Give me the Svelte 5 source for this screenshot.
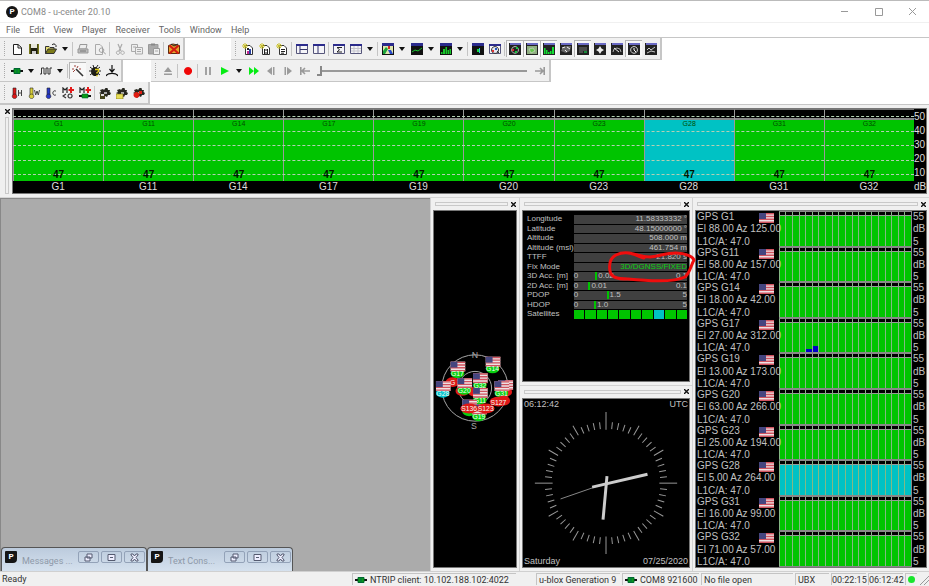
<script lang="ts">
  // [path, fill, stroke, stroke width]
  type Shape = [string, string, string?, number?];

  interface Tool {
    icon: string;
    label: string;
    down?: boolean;
    off?: boolean;
  }

  type Item = Tool | 'sep' | 'caret';

  const frame: Shape[] = [
    ['M0 0H12V12H0Z', '#111'],
    ['M0 0H12V3H0Z', '#2b2b8c'],
  ];
  const dockFrame: Shape[] = [
    ['M0 0H12V12H0Z', '#222'],
    ['M1 0H12V2H1Z', '#6a6ac4'],
  ];
  const lightFrame: Shape[] = [
    ['M.5 1.5H11.5V10.5H.5Z', '#f4f4f8', '#55557a', 1],
    ['M0 1H12V3H0Z', '#2b2b8c'],
  ];
  const sheet: Shape[] = [
    ['M3.5 2.5H8L10.5 5V11.5H3.5Z', '#fff', '#333', 1],
    ['M0 3H6M3 0V6M1 1L5 5M5 1L1 5', 'none', '#c9c02c', 1],
  ];
  const thermo = (color: string): Shape[] => [
    ['M2 1H5V8H2Z', color, '#222', 0.6],
    ['M3.5 7A2.3 2.3 0 1 0 3.6 7Z', color, '#222', 0.6],
  ];
  const gear: Shape[] = [
    ['M4 2L5 3L6.5 1H8.5L9 3L11 3L10.5 5L12 6L11 8L9 8L8 10L6 9L4 11L3 9L1 9L2 7L0 6L2 5L1 3Z', '#26261f'],
    ['M5 5H8V7H5Z', '#aaa'],
  ];
  const plug: Shape[] = [
    ['M0 6H12', 'none', '#111', 2],
    ['M3 3.5H9V8.5H3Z', '#0a9a18', '#063', 1],
    ['M6 4V8', 'none', '#065', 1],
  ];

  const icons: Record<string, Shape[]> = {
    new: [['M2.5 1.5H7L10.5 4.5V11.5H2.5Z', '#fff', '#222', 1], ['M7 1.5V5H10', 'none', '#222', 1]],
    save: [['M1 1H11V11H1Z', '#1c1c10'], ['M3 1H9V5H3Z', '#e6e6dc'], ['M1 1H2.5V11H1ZM9.5 1H11V11H9.5Z', '#77771c'], ['M4 8H8V11H4Z', '#ccc']],
    open: [['M.5 10.5V3.5H4L5 4.5H9V6', '#e5dd72', '#333', 1], ['M.5 10.5L3 6H11.5L9 10.5Z', '#7c7a18', '#333', 1], ['M7 2C8 .5 10 .5 11 2.5V4', 'none', '#222', 1]],
    print: [['M3 1.5H10L9 6H2Z', '#eee', '#999', 1], ['M1 6H11V10H1Z', '#bbb', '#999', 1], ['M3 8H9', 'none', '#777', 1]],
    preview: [['M1.5 1.5H6L8.5 4V11.5H1.5Z', '#f0f0f0', '#aaa', 1], ['M7.5 5A2.2 2.2 0 1 0 7.6 5ZM9 8.5L12 11.5', 'none', '#999', 1]],
    cut: [['M4 1L7 8M8 1L5 8', 'none', '#aaa', 1.2], ['M4 8A1.7 1.7 0 1 0 4.1 8ZM8.5 8A1.7 1.7 0 1 0 8.6 8Z', 'none', '#aaa', 1]],
    copy: [['M.5 1.5H6.5V8.5H.5Z', '#eee', '#aaa', 1], ['M4.5 4.5H11.5V11H4.5Z', '#eee', '#aaa', 1], ['M2 4H5M6 6.5H10M6 8.5H10', 'none', '#aaa', 1]],
    paste: [['M.5 1.5H10V11H.5Z', '#aaa', '#999', 1], ['M3 .5H7V2.5H3Z', '#888'], ['M5.5 5.5H11.5V11.5H5.5Z', '#eee', '#999', 1], ['M7 8H10', 'none', '#aaa', 1]],
    erase: [['M.5 2.5L5 1L11.5 2.5V10.5H.5Z', '#e5a52d', '#5b2a10', 1], ['M1.5 2.5L10.5 10.5M10.5 2.5L1.5 10.5', 'none', '#d31b10', 2.2], ['M3 1L6 3L10 1', 'none', '#222', 1]],
    sheetChart: [...sheet, ['M5 8H7V11H5Z', '#c3298f'], ['M7 6H9V11H7Z', '#2741a6'], ['M5 5H7V7H5Z', '#222']],
    sheetBinary: [...sheet, ['M5.5 6V11M8.5 6V11M7 6V8M7 9V11', 'none', '#222', 1]],
    sheetText: [...sheet, ['M5 6.5H9M5 8.5H9M5 10.2H8', 'none', '#222', 1]],
    viewTable: [...lightFrame, ['M4 3V10M4 6.5H11', 'none', '#33336a', 1]],
    viewTree: [...lightFrame, ['M5 3V10', 'none', '#33336a', 1]],
    viewSum: [...lightFrame, ['M9 4.5H4L6.5 6.7L4 9H9', 'none', '#222', 1]],
    viewGrid: [...lightFrame, ['M1 5.5H11M1 8H11M4 3V10M8 3V10', 'none', '#c4c4cc', 1]],
    map: [...frame, ['M1 3H11V11H1Z', '#dfe6ae'], ['M1 8L4 4L6 6L3 11H1Z', '#19a33a'], ['M6 7L9 7L11 11H8Z', '#2546c9'], ['M6 3H8V6H6Z', '#d22f24']],
    chartLine: [...frame, ['M1 9L4 7L7 8L11 5', 'none', '#16c42c', 1]],
    chartBars: [...frame, ['M1 9H2.5V11H1ZM3 6H5V11H3ZM5.5 4H7V11H5.5ZM7.5 7H9V11H7.5ZM9.5 6H11V11H9.5Z', '#18c92b']],
    deviation: [...frame, ['M5 6H8V9H5Z', '#10d838'], ['M7 5H8V10H7Z', '#38bfe0']],
    sky: [...lightFrame, ['M6 3.5A3.5 3.5 0 1 0 6.1 3.5Z', '#e5e5ee', '#333', 1], ['M3 7H5V9H3Z', '#d33'], ['M6 5H8V7H6Z', '#25b'], ['M8 8L10 10', 'none', '#333', 1]],
    dockSky: [...dockFrame, ['M6 3.5A3.4 3.4 0 1 0 6.1 3.5Z', 'none', '#b9b9b9', 1], ['M3 6H5V8H3Z', '#da2d2d'], ['M7 4H9V6H7ZM6 8H8V10H6Z', '#1ac33e']],
    dockMap: [...dockFrame, ['M1 3H11V11H1Z', '#8fae80'], ['M3 6L7 5L9 8L5 10Z', '#66c64c', '#ddd', 0.6]],
    dockLevel: [...dockFrame, ['M1 5H2.5V11H1ZM3 7H4.5V11H3ZM5 9H6.5V11H5ZM7 8H8.5V11H7ZM9 4H11V11H9Z', '#13df32']],
    dockWorld: [...dockFrame, ['M6 3L11 3L10 8L6 10L1 8L3 4Z', '#666'], ['M2 5L5 4M7 4L10 6M5 7L7 9', 'none', '#eee', 1]],
    dockData: [...dockFrame, ['M2 5H10M2 7H10M2 9H6', 'none', '#777', 1], ['M7 8H10V10H7Z', '#188a3a']],
    dockCompass: [...dockFrame, ['M6 3L7.5 5.5L10 7L7.5 8.5L6 11L4.5 8.5L2 7L4.5 5.5Z', '#eee']],
    dockSpeed: [...dockFrame, ['M2 9A4 4 0 0 1 10 9', 'none', '#aaa', 1], ['M3 5L8 9', 'none', '#eee', 1]],
    dockClock: [...dockFrame, ['M6 3.5A3.4 3.4 0 1 0 6.1 3.5Z', 'none', '#d5d5d5', 1], ['M6 5V7L8 9', 'none', '#fff', 1]],
    dockAlt: [...dockFrame, ['M2 7L4 5L6 7L10 4M2 10L6 8L10 9', 'none', '#ccc', 1]],
    plug,
    wave: [['M0 9H1.5V3H4V9H6V3H8V9H10V3H12', 'none', '#333', 1]],
    wand: [['M4 4L11 11', 'none', '#333', 1.6], ['M0 4H2M3 0V2M6 1L5 3M1 7L3 5M7 4H9', 'none', '#a0433c', 1]],
    bug: [['M6 2A4 4.5 0 1 0 6.1 2Z', '#1b1b12'], ['M1 2L11 10M1 10L11 2M0 6H12M4 0L5 3M9 0L7 3', 'none', '#222', 1], ['M6 4.5H9.5V6.5L8 7.5V8.5M8 10V11.5', 'none', '#e1cf1e', 1.4]],
    antenna: [['M6 0V7M3.5 4L6 7L8.5 4', 'none', '#111', 1.2], ['M0 11C2 7.5 10 7.5 12 11', 'none', '#111', 1.3]],
    eject: [['M6 2L10 7H2ZM2 8.5H10V10H2Z', '#9b9b9b']],
    record: [['M6 2A4 4 0 1 0 6.1 2Z', '#f00606']],
    pause: [['M3 2H5V10H3ZM7 2H9V10H7Z', '#a2a2a2']],
    play: [['M2 2L10 6L2 10Z', '#05ec13']],
    forward: [['M1 2L6 6L1 10ZM6 2L11 6L6 10Z', '#05ec13']],
    stepBack: [['M7 2V10L2 6ZM8 2H9.5V10H8Z', '#9b9b9b']],
    stepNext: [['M5 2V10L10 6ZM2.5 2H4V10H2.5Z', '#9b9b9b']],
    toStart: [['M1.8 2V10M3 6H11M6 3L3 6L6 9', 'none', '#999', 1.6]],
    toEnd: [['M10.2 2V10M1 6H9M6 3L9 6L6 9', 'none', '#999', 1.6]],
    hot: [...thermo('#e01818'), ['M7.5 3V9M10.5 3V9M7.5 6H10.5', 'none', '#444', 1]],
    warm: [...thermo('#d9cf3a'), ['M6.5 3L7.7 8L9 4L10.3 8L11.5 3', 'none', '#444', 1]],
    cold: [...thermo('#2638c8'), ['M11 4.3C10 3 7.8 4 7.8 6S10 9 11 7.7', 'none', '#444', 1]],
    msgPoll: [['M1 6V1L3 3L5 1V6', 'none', '#222', 1.2], ['M9 0V6M6.5 3H12', 'none', '#e31b1b', 2], ['M4 7L1 9L4 11M8 7A2 2 0 1 0 8.1 7Z', 'none', '#333', 1.2]],
    msgSend: [['M1 6V1L3 3L5 1V6', 'none', '#222', 1.2], ['M9 0V6M6.5 3H12', 'none', '#e31b1b', 2], ['M0 9H12', 'none', '#111', 2], ['M3 7H9V11H3Z', '#0a9a18', '#063', 0.6]],
    gearSave: [...gear, ['M1 7H6V12H1Z', '#44441c'], ['M2 7H5V9H2Z', '#ddd']],
    gearOpen: [...gear, ['M0 7H7V12H0Z', '#e6dc55', '#77701a', 0.6]],
    gearStop: [...gear, ['M3.5 5A3 3 0 1 0 3.6 5ZM6 4H9V7H6Z', '#e01d12']],
  };

  const t = (icon: string, label: string, extra: Partial<Tool> = {}): Tool => ({ icon, label, ...extra });

  const fileTools: Item[] = [
    t('new', 'New'), t('save', 'Save'), t('open', 'Open'), 'caret', 'sep',
    t('print', 'Print', { off: true }), t('preview', 'Print preview', { off: true }), 'sep',
    t('cut', 'Cut', { off: true }), t('copy', 'Copy', { off: true }), t('paste', 'Paste', { off: true }), 'sep',
    t('erase', 'Clear all'),
  ];
  const viewTools: Item[] = [
    t('sheetChart', 'Packet console'), t('sheetBinary', 'Binary console'), t('sheetText', 'Text console'), 'sep',
    t('viewTable', 'Messages view'), t('viewTree', 'Configuration view'), 'sep',
    t('viewSum', 'Statistic view'), t('viewGrid', 'Table view'), 'caret', 'sep',
    t('map', 'Map view'), 'caret', t('chartLine', 'Chart view'), 'caret', t('chartBars', 'Histogram view'), 'caret', 'sep',
    t('deviation', 'Deviation map'), t('sky', 'Sky view'), 'sep',
    t('dockSky', 'Satellite position', { down: true }), t('dockMap', 'Satellite level history', { down: true }),
    t('dockLevel', 'Satellite level', { down: true }), t('dockWorld', 'World position'), t('dockData', 'Data', { down: true }),
    t('dockCompass', 'Compass'), t('dockSpeed', 'Speedometer'), t('dockClock', 'Clock', { down: true }), t('dockAlt', 'Altitude meter'),
  ];
  const portTools: Item[] = [
    t('plug', 'Port'), 'caret', t('wave', 'Baudrate'), 'caret',
    'sep', t('wand', 'Autobauding', { down: true }), t('bug', 'Debug messages'), t('antenna', 'Receiver antenna'),
  ];
  const playTools: Item[] = [
    t('eject', 'Eject', { off: true }), 'sep', t('record', 'Record'), 'sep', t('pause', 'Pause', { off: true }),
    t('play', 'Play'), 'caret', t('forward', 'Fast forward'), t('stepBack', 'Step backward', { off: true }),
    t('stepNext', 'Step forward', { off: true }), t('toStart', 'Rewind to start', { off: true }),
  ];
  const actionTools: Item[] = [
    t('hot', 'Hotstart'), t('warm', 'Warmstart'), t('cold', 'Coldstart'), t('msgPoll', 'Poll message'), t('msgSend', 'Send message'), 'sep',
    t('gearSave', 'Save config'), t('gearOpen', 'Load config'), t('gearStop', 'Revert config'),
  ];

  const menus = ['File', 'Edit', 'View', 'Player', 'Receiver', 'Tools', 'Window', 'Help'];

  const satellites = [
    { id: 'G1', el: '88.00', az: '125.00' },
    { id: 'G11', el: '58.00', az: '157.00' },
    { id: 'G14', el: '18.00', az: '42.00' },
    { id: 'G17', el: '27.00', az: '312.00' },
    { id: 'G19', el: '13.00', az: '173.00' },
    { id: 'G20', el: '63.00', az: '266.00' },
    { id: 'G23', el: '25.00', az: '194.00' },
    { id: 'G28', el: '5.00', az: '264.00' },
    { id: 'G31', el: '16.00', az: '99.00' },
    { id: 'G32', el: '71.00', az: '57.00' },
  ];
  const isFloat = (id: string) => id === 'G28';

  const dips: Record<number, number> = { 4: 10, 5: 18 };

  const values = [
    ['Longitude', '11.58333332 °'],
    ['Latitude', '48.15000000 °'],
    ['Altitude', '508.000 m'],
    ['Altitude (msl)', '461.754 m'],
    ['TTFF', '21.820 s'],
    ['Fix Mode', '3D/DGNSS/FIXED'],
  ];
  const gauges = [
    { label: '3D Acc. [m]', value: '0.02', max: '0.1', pos: 19 },
    { label: '2D Acc. [m]', value: '0.01', max: '0.1', pos: 13 },
    { label: 'PDOP', value: '1.5', max: '5', pos: 29 },
    { label: 'HDOP', value: '1.0', max: '5', pos: 18 },
  ];

  // sky plot, centre 42,42
  const marks = [
    { id: 'G', x: 19, y: 36, color: '#e01818', flag: false },
    { id: '3', x: 42, y: 46, color: '#e01818', flag: false },
    { id: '', x: 73, y: 46, color: '#e01818', flag: true },
    { id: 'G17', x: 24, y: 27, color: '#08d010', flag: true },
    { id: 'G14', x: 60, y: 22, color: '#08d010', flag: true },
    { id: 'G28', x: 9, y: 47, color: '#00c4d0', flag: true },
    { id: 'G32', x: 47, y: 39, color: '#08d010', flag: true },
    { id: '', x: 29, y: 45, color: '#e01818', flag: false },
    { id: 'G20', x: 31, y: 44, color: '#08d010', flag: true },
    { id: 'G11', x: 47, y: 54, color: '#08d010', flag: true },
    { id: 'G31', x: 69, y: 47, color: '#08d010', flag: true },
    { id: '', x: 36, y: 66, color: '#08d010', flag: true },
    { id: 'G19', x: 46, y: 71, color: '#08d010', flag: true },
    { id: '', x: 71, y: 55, color: '#e01818', flag: false },
    { id: 'S127', x: 66, y: 56, color: '#e01818', flag: false },
    { id: 'S123', x: 53, y: 63, color: '#e01818', flag: false },
    { id: 'S136', x: 36, y: 63, color: '#e01818', flag: false },
  ];

  const ticks = Array.from({ length: 60 }, (_, i) => {
    if (i % 15 === 0) return { angle: i * 6, from: 54, to: 72 };
    if (i % 5 === 0) return { angle: i * 6, from: 56, to: 67 };
    return { angle: i * 6, from: 55, to: 62 };
  });

  let progress = $state(0);
</script>

{#snippet icon(name: string)}
  <svg class="icon" viewBox="0 0 12 12" aria-hidden="true">
    {#each icons[name] as [d, fill, stroke, width]}
      <path {d} {fill} stroke={stroke ?? 'none'} stroke-width={width ?? 0} />
    {/each}
  </svg>
{/snippet}

{#snippet toolbar(items: Item[])}
  <span class="grip"></span>
  {#each items as item}
    {#if item === 'sep'}
      <span class="sep"></span>
    {:else if item === 'caret'}
      <button class="caret" aria-label="More options">
        <svg width="6" height="4" viewBox="0 0 6 4"><path d="M0 0H6L3 4Z" fill="#111" /></svg>
      </button>
    {:else}
      <button class="tool" class:down={item.down} disabled={item.off} title={item.label} aria-label={item.label}>
        {@render icon(item.icon)}
      </button>
    {/if}
  {/each}
{/snippet}

{#snippet flagShapes()}
  <path d="M0 0H15V10H0Z" fill="#eee1e3" />
  <path d="M0 .7H15M0 3.5H15M0 6.3H15M0 9.2H15" stroke="#d0535f" stroke-width="1.4" />
  <path d="M0 0H7V6H0Z" fill="#45457f" />
{/snippet}

{#snippet caption()}
  <div class="caption">
    <span class="ridge"></span>
    <button class="close" aria-label="Close panel">
      <svg width="5" height="5" viewBox="0 0 5 5"><path d="M0 0L5 5M5 0L0 5" stroke="#111" stroke-width="1.4" /></svg>
    </button>
  </div>
{/snippet}

{#snippet logo()}
  <span class="logo">P</span>
{/snippet}

<div class="app">
  <header class="titlebar">
    {@render logo()}
    <h1>COM8 - u-center 20.10</h1>
    <div class="window-buttons">
      <button aria-label="Minimize"><svg width="9" height="9" viewBox="0 0 9 9"><path d="M1 4.5H8" /></svg></button>
      <button aria-label="Maximize"><svg width="9" height="9" viewBox="0 0 9 9"><path d="M1.5 1.5H8.5V8.5H1.5Z" /></svg></button>
      <button aria-label="Close"><svg width="9" height="9" viewBox="0 0 9 9"><path d="M1 1L8 8M8 1L1 8" /></svg></button>
    </div>
  </header>

  <nav class="menu">
    {#each menus as item}
      <button>{item}</button>
    {/each}
  </nav>

  <div class="bars">
    <div class="bar-row">
      <div class="bar" role="toolbar" aria-label="File">{@render toolbar(fileTools)}</div>
      <div class="bar" role="toolbar" aria-label="Views">{@render toolbar(viewTools)}</div>
    </div>
    <div class="bar-row narrow">
      <div class="bar" role="toolbar" aria-label="Port">{@render toolbar(portTools)}</div>
      <div class="bar" role="toolbar" aria-label="Player">
        {@render toolbar(playTools)}
        <input class="seek" type="range" min="0" max="100" bind:value={progress} aria-label="Playback position" />
        <button class="tool" disabled title="Go to end" aria-label="Go to end">{@render icon('toEnd')}</button>
      </div>
    </div>
    <div class="bar-row">
      <div class="bar" role="toolbar" aria-label="Actions">{@render toolbar(actionTools)}</div>
    </div>
  </div>

  <section class="levels">
    <div class="side-caption">
      <button class="close" aria-label="Close panel">
        <svg width="5" height="5" viewBox="0 0 5 5"><path d="M0 0L5 5M5 0L0 5" stroke="#111" stroke-width="1.4" /></svg>
      </button>
      <span class="side-ridge"></span>
    </div>
    <div class="level-panel">
      <div class="level-plot">
        {#each satellites as sat}
          <div class="level">
            <div class="level-bar" class:float={isFloat(sat.id)}>
              <small>{sat.id}</small>
              <b>47</b>
            </div>
            <span class="level-name">{sat.id}</span>
          </div>
        {/each}
        <div class="grid-lines">
          {#each [50, 40, 30, 20, 10] as _}
            <span></span>
          {/each}
        </div>
      </div>
      <div class="level-scale">
        {#each ['50', '40', '30', '20', '10', 'dB'] as mark}
          <span>{mark}</span>
        {/each}
      </div>
    </div>
  </section>

  <main class="work">
    <div class="mdi">
      {#each ['Messages ...', 'Text Cons...'] as title}
        <div class="mini">
          {@render logo()}
          <span class="mini-title">{title}</span>
          <button aria-label="Restore"><svg width="9" height="9" viewBox="0 0 9 9"><path d="M3 1H8V5H3ZM1 4H6V8H1Z" fill="#eef" stroke="#555b70" /></svg></button>
          <button aria-label="Maximize"><svg width="9" height="9" viewBox="0 0 9 9"><path d="M1 1.5H8V7.5H1ZM3 4.5H6" fill="#eef" stroke="#555b70" /></svg></button>
          <button aria-label="Close"><svg width="9" height="9" viewBox="0 0 9 9"><path d="M1 1H3L4.5 3L6 1H8V2L6 4.5L8 7V8H6L4.5 6L3 8H1V7L3 4.5L1 2Z" fill="#eef" stroke="#555b70" /></svg></button>
        </div>
      {/each}
    </div>

    <section class="dock">
      {@render caption()}
      <div class="panel sky">
        <svg viewBox="0 0 84 87" role="img" aria-label="Satellite positions">
          <g fill="none" stroke="#aaa">
            <circle cx="42" cy="42" r="34" />
            <circle cx="42" cy="42" r="17" />
          </g>
          <text class="pole" x="42" y="11">N</text>
          <text class="pole" x="41" y="84">S</text>
          {#each marks as mark}
            <ellipse cx={mark.x} cy={mark.y} rx={mark.id.length > 3 ? 9 : 7} ry="5" fill={mark.color} />
            {#if mark.flag}
              <g transform="translate({mark.x - 7} {mark.y - 12})">{@render flagShapes()}</g>
            {/if}
            {#if mark.id}
              <text class="mark" x={mark.x} y={mark.y + 3}>{mark.id}</text>
            {/if}
          {/each}
        </svg>
      </div>
    </section>

    <div class="middle">
      <section class="dock">
        {@render caption()}
        <div class="panel data">
          <dl>
            {#each values as [label, value]}
              <dt>{label}</dt>
              <dd class:fixed={label === 'Fix Mode'}><span>{value}</span></dd>
            {/each}
            {#each gauges as gauge}
              <dt>{gauge.label}</dt>
              <dd class="gauge">
                <span>0</span>
                <span class="needle" style="left: {gauge.pos}%">{gauge.value}</span>
                <span>{gauge.max}</span>
              </dd>
            {/each}
            <dt>Satellites</dt>
            <dd class="used">
              {#each satellites as sat}
                <i class:float={isFloat(sat.id)}></i>
              {/each}
            </dd>
          </dl>
          <svg class="scribble" width="92" height="34" viewBox="0 0 92 34" aria-hidden="true">
            <path d="M22 3C31 4 36 7 44 7C53 6 60 3 70 3C80 3 87 7 88 10C85 15 84 23 79 27C69 32 42 31 22 29C10 29 5 27 4 21C3 15 4 8 10 5C14 3 21 2 27 4C31 5 34 7 38 8" />
          </svg>
        </div>
      </section>
      <section class="dock">
        {@render caption()}
        <div class="panel clock">
          <div class="clock-row"><span>06:12:42</span><span>UTC</span></div>
          <svg viewBox="-84 -72 168 144" role="img" aria-label="Clock">
            {#each ticks as tick}
              <path d="M0 {-tick.from}V{-tick.to}" stroke="#999" transform="rotate({tick.angle})" />
            {/each}
            <path d="M0 0L-46 16" stroke="#888" />
            <path d="M-14 4L42 -9" stroke="#ccc" stroke-width="3" />
            <path d="M1 -7L-3 37" stroke="#ccc" stroke-width="3" />
          </svg>
          <div class="clock-row"><span>Saturday</span><span>07/25/2020</span></div>
        </div>
      </section>
    </div>

    <section class="dock">
      {@render caption()}
      <div class="panel history">
        {#each satellites as sat}
          <div class="track">
            <div class="track-info">
              <span>GPS {sat.id}</span>
              <span>El {sat.el} Az {sat.az}</span>
              <span>L1C/A: 47.0</span>
              <svg class="flag" width="15" height="10" viewBox="0 0 15 10" aria-hidden="true">{@render flagShapes()}</svg>
            </div>
            <div class="track-plot" class:float={isFloat(sat.id)}>
              {#each { length: 20 } as _, i}
                <span>
                  {#if sat.id === 'G17' && dips[i]}
                    <i style="height: {dips[i]}%"></i>
                  {/if}
                </span>
              {/each}
            </div>
            <div class="track-scale"><span>55</span><span>dB</span><span>5</span></div>
          </div>
        {/each}
      </div>
    </section>
  </main>

  <footer class="status">
    <span class="ready">Ready</span>
    <span class="cell ntrip">{@render icon('plug')}NTRIP client: 10.102.188.102:4022</span>
    <span class="cell gen">u-blox Generation 9</span>
    <span class="cell port">{@render icon('plug')}COM8 921600</span>
    <span class="cell file">No file open</span>
    <span class="cell proto">UBX</span>
    <span class="cell time">00:22:15</span>
    <span class="cell time">06:12:42</span>
    <span class="cell led"><i></i></span>
    <svg width="10" height="11" viewBox="0 0 10 11" aria-hidden="true"><path d="M1 11L10 2M5 11L10 6" stroke="#999" /></svg>
  </footer>
</div>

<style>
  :global(body) {
    margin: 0;
    background: #f0f0f0;
  }

  .app {
    --face: #f0f0f0;
    --line: #c6c6c6;
    --green: #00c400;
    --cyan: #00c2c4;
    display: flex;
    flex-direction: column;
    min-height: 100vh;
    box-sizing: border-box;
    border-top: 1px solid #bbb;
    background: var(--face);
    color: #333;
    font-family: Roboto, 'Open Sans', sans-serif;
    font-size: 9px;
    line-height: 12px;
  }

  button {
    display: flex;
    align-items: center;
    justify-content: center;
    padding: 0;
    border: 0;
    background: none;
    color: inherit;
    font: inherit;
  }

  .float {
    --green: var(--cyan);
  }

  .titlebar {
    display: flex;
    align-items: center;
    height: 21px;
    padding-left: 6px;
    background: #fff;
  }

  .logo {
    width: 12px;
    height: 12px;
    border-radius: 6px;
    background: #151515;
    color: #fff;
    font-size: 8px;
    font-weight: 700;
    line-height: 12px;
    text-align: center;
  }

  h1 {
    flex: 1;
    margin: 0 0 0 3px;
    color: #888;
    font-size: 9px;
    font-weight: 400;
  }

  .window-buttons {
    display: flex;
  }

  .window-buttons button {
    width: 34px;
    height: 21px;
  }

  .window-buttons path {
    fill: none;
    stroke: #999;
  }

  .menu {
    display: flex;
    gap: 9px;
    height: 14px;
    padding-left: 6px;
    border-top: 1px solid #f0f0f0;
    background: #fff;
    color: #666;
  }

  .bars {
    border-top: 1px solid var(--line);
    border-bottom: 1px solid var(--line);
    background: #fff;
  }

  .bar-row {
    display: flex;
    gap: 46px;
    height: 22px;
  }

  .bar-row.narrow {
    gap: 28px;
  }

  .bar {
    display: flex;
    align-items: center;
    box-sizing: border-box;
    padding-right: 1px;
    border-right: 2px solid var(--line);
    border-bottom: 1px solid var(--line);
    background: var(--face);
  }

  .grip {
    width: 2px;
    height: 15px;
    margin: 0 2px 0 4px;
    border-left: 1px dotted #aaa;
    box-sizing: border-box;
  }

  .sep {
    width: 1px;
    height: 14px;
    margin: 0 1px;
    background: #c4c4c4;
  }

  .tool {
    width: 17px;
    height: 17px;
    box-sizing: border-box;
  }

  .tool.down {
    border-top: 1px solid #b5b5b5;
    border-left: 1px solid #b5b5b5;
    background: #f8f8f8;
  }

  .icon {
    flex: none;
    width: 12px;
    height: 12px;
  }

  .caret {
    width: 12px;
    height: 17px;
  }

  .seek {
    width: 210px;
    height: 16px;
    margin: 0 4px;
    appearance: none;
    background: linear-gradient(#999, #999) center / 100% 2px no-repeat;
  }

  .seek::-webkit-slider-thumb {
    appearance: none;
    width: 5px;
    height: 10px;
    border-right: 2px solid #888;
    border-bottom: 2px solid #888;
    background: var(--face);
  }

  .levels {
    display: flex;
    padding: 3px 2px;
    border-bottom: 1px solid #d5d5d5;
  }

  .side-caption {
    display: flex;
    flex-direction: column;
    align-items: center;
    width: 10px;
  }

  .side-ridge {
    flex: 1;
    width: 2px;
    margin-top: 3px;
    border: 1px solid #c9c9c9;
  }

  .close {
    width: 7px;
    height: 6px;
  }

  .level-panel {
    display: flex;
    flex: 1;
    height: 84px;
    border: 1px solid #777;
    background: #000;
    color: #ddd;
    font-family: 'Liberation Sans', Arial, sans-serif;
    font-size: 10px;
  }

  .level-plot {
    position: relative;
    display: flex;
    flex: 1;
  }

  .level {
    display: flex;
    flex: 1;
    flex-direction: column;
    text-align: center;
  }

  .level-bar {
    display: flex;
    flex: 1;
    flex-direction: column;
    justify-content: space-between;
    border-left: 1px solid #9a9a9a;
    border-top: 1px solid #777;
    background: linear-gradient(#000 8px, #888 8px, #888 10px, var(--green) 10px);
    padding-top: 10px;
    color: #001500;
  }

  .level-bar small {
    color: #004d00;
    font-size: 7px;
    line-height: 7px;
  }

  .level-bar b {
    position: relative;
    z-index: 1;
    font-size: 10px;
  }

  .level-name {
    line-height: 12px;
  }

  .grid-lines {
    position: absolute;
    inset: 7px 0 18px;
    display: flex;
    flex-direction: column;
    justify-content: space-between;
  }

  .grid-lines span {
    border-top: 1px dashed #b4d0b4;
  }

  .level-scale {
    display: flex;
    flex-direction: column;
    justify-content: space-between;
    width: 12px;
    padding-top: 2px;
  }

  .work {
    display: grid;
    grid-template-columns: 430fr 89fr 173fr 237fr;
    flex: 1;
  }

  .mdi {
    display: flex;
    align-items: flex-end;
    border-top: 1px solid #888;
    border-left: 1px solid #888;
    background: #ababab;
  }

  .mini {
    display: flex;
    align-items: flex-start;
    gap: 2px;
    width: 140px;
    height: 20px;
    padding: 3px 1px 0 3px;
    border: 1px solid #555;
    border-bottom: 0;
    border-radius: 4px 4px 0 0;
    background: linear-gradient(#bccbdd, #d5e1ee);
  }

  .mini .logo {
    border-radius: 1px 1px 4px 1px;
  }

  .mini-title {
    flex: 1;
    align-self: center;
    margin-left: 3px;
    color: #8e99a8;
  }

  .mini button {
    width: 21px;
    height: 12px;
    border: 1px solid #93a2b8;
    border-radius: 2px;
  }

  .dock {
    display: flex;
    flex: 1;
    flex-direction: column;
    padding: 0 2px 3px;
    border-left: 1px solid #d2d2d2;
  }

  .caption {
    display: flex;
    align-items: center;
    gap: 2px;
    height: 12px;
  }

  .ridge {
    flex: 1;
    height: 2px;
    margin-left: 2px;
    border: 1px solid #c9c9c9;
  }

  .panel {
    flex: 1;
    border: 1px solid #777;
    background: #000;
    color: #c0c0c0;
    font-family: 'Liberation Sans', Arial, sans-serif;
  }

  .sky {
    display: flex;
    align-items: center;
  }

  .sky svg {
    width: 100%;
  }

  .sky text {
    font-size: 7px;
    text-anchor: middle;
  }

  .sky .pole {
    fill: #aaa;
    font-size: 9px;
  }

  .mark {
    fill: #f2fff2;
  }

  .middle {
    display: grid;
    grid-template-rows: 1fr 1fr;
  }

  .middle .dock + .dock {
    border-top: 1px solid #d2d2d2;
  }

  .data {
    position: relative;
    font-size: 8px;
    line-height: 8px;
  }

  dl {
    display: grid;
    grid-template-columns: 45fr 114fr;
    grid-template-rows: repeat(11, 1fr);
    height: 105px;
    margin: 4px 2px 0 4px;
  }

  dt {
    white-space: nowrap;
  }

  dd {
    position: relative;
    display: flex;
    justify-content: flex-end;
    margin: 0 0 1px;
    background: #404040;
  }

  dd.fixed {
    color: #08d010;
  }

  dd.gauge {
    justify-content: space-between;
  }

  .needle {
    position: absolute;
    border-left: 2px solid var(--green);
    padding-left: 1px;
  }

  dd.used {
    gap: 1px;
    background: none;
  }

  .used i {
    flex: 1;
    background: var(--green);
  }

  .scribble {
    position: absolute;
    top: 39px;
    right: -9px;
    z-index: 2;
  }

  .scribble path {
    fill: none;
    stroke: #f00d0d;
    stroke-width: 3;
    stroke-linecap: round;
  }

  .clock {
    display: flex;
    flex-direction: column;
    justify-content: space-between;
    font-size: 9px;
  }

  .clock-row {
    display: flex;
    justify-content: space-between;
    padding: 0 1px;
    line-height: 11px;
  }

  .history {
    display: flex;
    flex-direction: column;
    font-size: 10px;
    line-height: 11px;
  }

  .track {
    display: flex;
    flex: 1;
  }

  .track-info {
    position: relative;
    display: flex;
    flex-direction: column;
    justify-content: space-between;
    width: 36%;
    padding-left: 1px;
    box-sizing: border-box;
    white-space: nowrap;
  }

  .flag {
    position: absolute;
    top: 2px;
    right: 5px;
  }

  .track-plot {
    display: flex;
    flex: 1;
    border-top: 1px solid #888;
    border-bottom: 1px solid #888;
    border-right: 1px solid #888;
    background: linear-gradient(#000 3px, #999 3px, #999 4px, var(--green) 4px);
  }

  .track-plot span {
    display: flex;
    flex: 1;
    align-items: flex-end;
    border-left: 1px solid #84b884;
  }

  .track-plot i {
    flex: 1;
    background: #0000c8;
  }

  .track-scale {
    display: flex;
    flex-direction: column;
    justify-content: space-between;
    width: 13px;
    padding-left: 1px;
  }

  .status {
    display: flex;
    align-items: center;
    gap: 2px;
    height: 14px;
    border-top: 1px solid #d0d0d0;
    white-space: nowrap;
  }

  .ready {
    flex: 1;
    padding-left: 2px;
  }

  .cell {
    display: flex;
    align-items: center;
    gap: 3px;
    height: 12px;
    box-sizing: border-box;
    padding-left: 2px;
    border-top: 1px solid #c4c4c4;
    border-left: 1px solid #c4c4c4;
  }

  .ntrip {
    width: 164px;
    margin-right: 18px;
  }

  .gen {
    width: 84px;
  }

  .port {
    width: 77px;
  }

  .file {
    width: 92px;
  }

  .proto {
    width: 34px;
  }

  .time {
    width: 35px;
    padding-left: 0;
  }

  .led {
    width: 12px;
  }

  .led i {
    width: 7px;
    height: 7px;
    border-radius: 4px;
    background: #18e52c;
  }
</style>
